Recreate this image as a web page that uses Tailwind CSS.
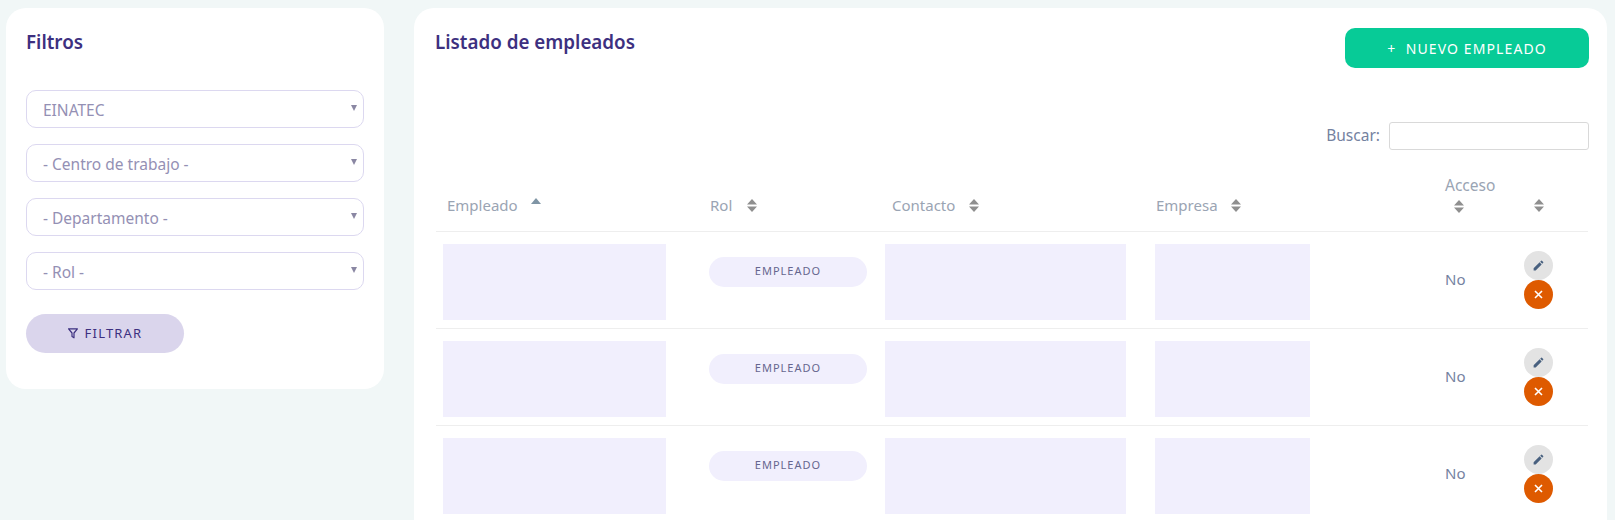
<!DOCTYPE html>
<html lang="es">
<head>
<meta charset="utf-8">
<title>Listado de empleados</title>
<script src="https://cdn.jsdelivr.net/npm/@tailwindcss/browser@4"></script>
</head>
<body class="h-[520px] overflow-hidden bg-[#f1f7f7] font-['Noto_Sans','Lato',sans-serif]">
<div class="flex items-start pt-2 pl-[6px] pr-2 gap-[30px]">
  <aside class="w-[378px] h-[381px] shrink-0 rounded-[20px] bg-white pl-5 pr-5 pt-[21px]">
    <h2 class="text-[18.8px] leading-[26px] font-semibold text-[#3d3080]">Filtros</h2>
    <form class="mt-[35px] flex flex-col gap-4">
      <div class="relative"><select class="w-full h-[38px] appearance-none rounded-[10px] border border-[#dcd8f0] bg-white pl-4 pt-[4px] text-[15.5px] text-[#9490b4]"><option>EINATEC</option></select><span class="absolute right-[7px] top-[15px] text-[#8a87a3] border-x-[3.5px] border-t-[6px] border-x-transparent border-t-current"></span></div>
      <div class="relative"><select class="w-full h-[38px] appearance-none rounded-[10px] border border-[#dcd8f0] bg-white pl-4 pt-[4px] text-[15.5px] text-[#9490b4]"><option>- Centro de trabajo -</option></select><span class="absolute right-[7px] top-[15px] text-[#8a87a3] border-x-[3.5px] border-t-[6px] border-x-transparent border-t-current"></span></div>
      <div class="relative"><select class="w-full h-[38px] appearance-none rounded-[10px] border border-[#dcd8f0] bg-white pl-4 pt-[4px] text-[15.5px] text-[#9490b4]"><option>- Departamento -</option></select><span class="absolute right-[7px] top-[15px] text-[#8a87a3] border-x-[3.5px] border-t-[6px] border-x-transparent border-t-current"></span></div>
      <div class="relative"><select class="w-full h-[38px] appearance-none rounded-[10px] border border-[#dcd8f0] bg-white pl-4 pt-[4px] text-[15.5px] text-[#9490b4]"><option>- Rol -</option></select><span class="absolute right-[7px] top-[15px] text-[#8a87a3] border-x-[3.5px] border-t-[6px] border-x-transparent border-t-current"></span></div>
      <button type="button" class="mt-2 flex h-[39px] w-[158px] items-center justify-center gap-[7px] rounded-full bg-[#dad5ec] text-[13px] tracking-[1.2px] text-[#3d3080]">
        <svg width="10" height="11" viewBox="0 0 10 11" fill="none" stroke="currentColor" stroke-width="1.2" stroke-linejoin="round"><path d="M.6.8h8.8L6 5v4.8L4 8.6V5z"/></svg>
        FILTRAR
      </button>
    </form>
  </aside>
  <main class="h-[512px] flex-1 rounded-t-[20px] bg-white">
    <div class="flex items-start justify-between pl-[21px] pr-[18px] pt-5">
      <h1 class="mt-[1px] text-[18.8px] leading-[26px] font-semibold text-[#3d3080]">Listado de empleados</h1>
      <button type="button" class="h-[40px] w-[244px] rounded-[10px] bg-[#07cb97] text-[14px] tracking-[1.1px] text-white">+ &nbsp;NUEVO EMPLEADO</button>
    </div>
    <div class="mt-[54px] flex items-center justify-end gap-[9px] pr-[18px] text-[15.5px] text-[#75829f]">
      <label for="q">Buscar:</label>
      <input id="q" class="h-[28px] w-[200px] rounded-[3px] border border-[#d9d9d9] bg-white">
    </div>
    <div class="pl-[22px] pr-[19px]">
      <table class="mt-[10px] w-full table-fixed border-collapse">
        <colgroup><col class="w-[266px]"><col class="w-[176px]"><col class="w-[270px]"><col class="w-[290px]"><col class="w-[74px]"><col class="w-[76px]"></colgroup>
        <thead>
          <tr class="h-[71px] border-b border-[#eeeeee] text-left text-[15px] font-normal text-[#9aa4b3]">
            <th class="pl-[11px] pt-[20px] font-normal"><span class="inline-flex items-center gap-[13px]">Empleado<span class="-mt-2 border-x-[5px] border-b-[6px] border-x-transparent border-b-[#7f95a5]"></span></span></th>
            <th class="pl-2 pt-[20px] font-normal"><span class="inline-flex items-center gap-[15px]">Rol<svg width="10" height="13" viewBox="0 0 10 13" fill="#8f8f8f"><path d="M5 0l5 5.5H0zM5 13L0 7.5h10z"/></svg></span></th>
            <th class="pl-[14px] pt-[20px] font-normal"><span class="inline-flex items-center gap-[14px]">Contacto<svg width="10" height="13" viewBox="0 0 10 13" fill="#8f8f8f"><path d="M5 0l5 5.5H0zM5 13L0 7.5h10z"/></svg></span></th>
            <th class="pl-2 pt-[20px] font-normal"><span class="inline-flex items-center gap-[13px]">Empresa<svg width="10" height="13" viewBox="0 0 10 13" fill="#8f8f8f"><path d="M5 0l5 5.5H0zM5 13L0 7.5h10z"/></svg></span></th>
            <th class="pl-[7px] font-normal"><div class="-mt-[2px] text-[15.5px] leading-5">Acceso</div><svg class="ml-[9px] mt-[5px]" width="10" height="13" viewBox="0 0 10 13" fill="#8f8f8f"><path d="M5 0l5 5.5H0zM5 13L0 7.5h10z"/></svg></th>
            <th class="pl-[22px] pt-[20px] font-normal"><svg width="10" height="13" viewBox="0 0 10 13" fill="#8f8f8f"><path d="M5 0l5 5.5H0zM5 13L0 7.5h10z"/></svg></th>
          </tr>
        </thead>
        <tbody class="text-[15px] text-[#75829f]">
          <tr class="h-[97px] border-b border-[#eeeeee]">
            <td class="pl-[7px] pt-[4px]"><div class="h-[76px] w-[223px] bg-[#f1effd]"></div></td>
            <td class="pl-[7px] pb-[16px]"><div class="flex h-[30px] w-[158px] items-center justify-center rounded-full bg-[#f1effd] pb-[1px] text-[11px] tracking-[1px] text-[#66668f]">EMPLEADO</div></td>
            <td class="pl-[7px] pt-[4px]"><div class="h-[76px] w-[241px] bg-[#f1effd]"></div></td>
            <td class="pl-[7px] pt-[4px]"><div class="h-[76px] w-[155px] bg-[#f1effd]"></div></td>
            <td class="pl-[7px]">No</td>
            <td class="pl-3"><div class="flex flex-col"><span class="flex size-[29px] items-center justify-center rounded-full bg-[#e3e3e3]"><svg width="13" height="13" viewBox="0 0 24 24" fill="#48607f"><path d="M3 17.25V21h3.75L17.81 9.94l-3.75-3.75zM20.71 7.04a1 1 0 0 0 0-1.41l-2.34-2.34a1 1 0 0 0-1.41 0l-1.83 1.83 3.75 3.75z"/></svg></span><span class="flex size-[29px] items-center justify-center rounded-full bg-[#de5a00]"><svg width="11" height="11" viewBox="0 0 11 11" stroke="#fff" stroke-width="1.6"><path d="M2 2l7 7M9 2l-7 7"/></svg></span></div></td>
          </tr>
          <tr class="h-[97px] border-b border-[#eeeeee]">
            <td class="pl-[7px] pt-[4px]"><div class="h-[76px] w-[223px] bg-[#f1effd]"></div></td>
            <td class="pl-[7px] pb-[16px]"><div class="flex h-[30px] w-[158px] items-center justify-center rounded-full bg-[#f1effd] pb-[1px] text-[11px] tracking-[1px] text-[#66668f]">EMPLEADO</div></td>
            <td class="pl-[7px] pt-[4px]"><div class="h-[76px] w-[241px] bg-[#f1effd]"></div></td>
            <td class="pl-[7px] pt-[4px]"><div class="h-[76px] w-[155px] bg-[#f1effd]"></div></td>
            <td class="pl-[7px]">No</td>
            <td class="pl-3"><div class="flex flex-col"><span class="flex size-[29px] items-center justify-center rounded-full bg-[#e3e3e3]"><svg width="13" height="13" viewBox="0 0 24 24" fill="#48607f"><path d="M3 17.25V21h3.75L17.81 9.94l-3.75-3.75zM20.71 7.04a1 1 0 0 0 0-1.41l-2.34-2.34a1 1 0 0 0-1.41 0l-1.83 1.83 3.75 3.75z"/></svg></span><span class="flex size-[29px] items-center justify-center rounded-full bg-[#de5a00]"><svg width="11" height="11" viewBox="0 0 11 11" stroke="#fff" stroke-width="1.6"><path d="M2 2l7 7M9 2l-7 7"/></svg></span></div></td>
          </tr>
          <tr class="h-[97px] border-b border-[#eeeeee]">
            <td class="pl-[7px] pt-[4px]"><div class="h-[76px] w-[223px] bg-[#f1effd]"></div></td>
            <td class="pl-[7px] pb-[16px]"><div class="flex h-[30px] w-[158px] items-center justify-center rounded-full bg-[#f1effd] pb-[1px] text-[11px] tracking-[1px] text-[#66668f]">EMPLEADO</div></td>
            <td class="pl-[7px] pt-[4px]"><div class="h-[76px] w-[241px] bg-[#f1effd]"></div></td>
            <td class="pl-[7px] pt-[4px]"><div class="h-[76px] w-[155px] bg-[#f1effd]"></div></td>
            <td class="pl-[7px]">No</td>
            <td class="pl-3"><div class="flex flex-col"><span class="flex size-[29px] items-center justify-center rounded-full bg-[#e3e3e3]"><svg width="13" height="13" viewBox="0 0 24 24" fill="#48607f"><path d="M3 17.25V21h3.75L17.81 9.94l-3.75-3.75zM20.71 7.04a1 1 0 0 0 0-1.41l-2.34-2.34a1 1 0 0 0-1.41 0l-1.83 1.83 3.75 3.75z"/></svg></span><span class="flex size-[29px] items-center justify-center rounded-full bg-[#de5a00]"><svg width="11" height="11" viewBox="0 0 11 11" stroke="#fff" stroke-width="1.6"><path d="M2 2l7 7M9 2l-7 7"/></svg></span></div></td>
          </tr>
        </tbody>
      </table>
    </div>
  </main>
</div>
</body>
</html>
